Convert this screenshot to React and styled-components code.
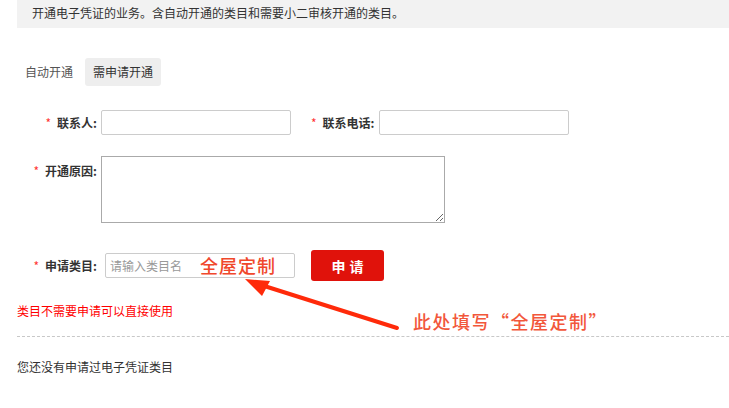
import React from 'react';
import styled, { createGlobalStyle } from 'styled-components';

const Global = createGlobalStyle`
  body {
    margin: 0;
    background: #fff;
    font-family: "Noto Sans CJK SC", "Liberation Sans", sans-serif;
    font-size: 12px;
    color: #333;
  }
`;

const Page = styled.div`
  position: relative;
  width: 729px;
  height: 408px;
  padding-left: 17px;
  box-sizing: border-box;
  overflow: hidden;
`;

const Banner = styled.div`
  height: 28px;
  line-height: 26px;
  background: #f2f2f2;
  padding-left: 15px;
  color: #333;
`;

const Tabs = styled.div`
  display: flex;
  gap: 4px;
  margin-top: 30px;
`;

const Tab = styled.div`
  height: 28px;
  line-height: 28px;
  padding: 0 8px;
  border-radius: 3px;
  color: ${p => (p.active ? '#333' : '#555')};
  background: ${p => (p.active ? '#eeeeee' : 'transparent')};
`;

const Row = styled.div`
  display: flex;
  align-items: ${p => (p.top ? 'flex-start' : 'center')};
  margin-top: ${p => p.mt}px;
`;

const Label = styled.label`
  width: ${p => (p.auto ? 'auto' : '80px')};
  margin-left: ${p => (p.auto ? '20px' : '0')};
  margin-right: ${p => p.gap || 4}px;
  padding-top: ${p => (p.top ? '6px' : '0')};
  text-align: right;
  font-weight: bold;
  color: #333;
  white-space: nowrap;
`;

const Star = styled.span`
  color: #f33;
  font-weight: normal;
  margin-right: 6px;
`;

const Input = styled.input`
  width: ${p => p.w}px;
  height: 25px;
  box-sizing: border-box;
  border: 1px solid #ccc;
  border-radius: 2px;
  padding: 0 4px;
  font: inherit;
  font-size: 12px;
  outline: none;
  &::placeholder {
    color: #999;
  }
`;

const TextArea = styled.textarea`
  width: 344px;
  height: 67px;
  box-sizing: border-box;
  border: 1px solid #aaa;
  border-radius: 0;
  font: inherit;
  margin: 0;
`;

const Submit = styled.button`
  margin-left: 16px;
  width: 73px;
  height: 31px;
  border: none;
  border-radius: 3px;
  background: #e0120b;
  color: #fff;
  font-family: inherit;
  font-size: 14px;
  font-weight: bold;
  letter-spacing: 4px;
  text-indent: 4px;
`;

const Hint = styled.p`
  margin: 21px 0 0;
  line-height: 18px;
  color: #f00;
`;

const Divider = styled.hr`
  margin: 16px 0 0;
  border: none;
  border-top: 1px dashed #c8c8c8;
`;

const Empty = styled.p`
  margin: 21px 0 0;
  line-height: 18px;
  color: #333;
`;

const Note = styled.span`
  position: absolute;
  left: ${p => p.x}px;
  top: ${p => p.y}px;
  font-size: 18px;
  font-weight: 500;
  letter-spacing: ${p => p.spacing}px;
  color: ${p => p.color};
  line-height: 20px;
  white-space: nowrap;
`;

const Arrow = styled.svg`
  position: absolute;
  left: 0;
  top: 0;
  pointer-events: none;
`;

export default function App() {
  return (
    <>
      <Global />
      <Page>
        <Banner>开通电子凭证的业务。含自动开通的类目和需要小二审核开通的类目。</Banner>
        <Tabs>
          <Tab>自动开通</Tab>
          <Tab active>需申请开通</Tab>
        </Tabs>

        <Row mt={24}>
          <Label><Star>*</Star>联系人:</Label>
          <Input w={190} />
          <Label auto><Star>*</Star>联系电话:</Label>
          <Input w={190} />
        </Row>

        <Row mt={21} top>
          <Label top><Star>*</Star>开通原因:</Label>
          <TextArea />
        </Row>

        <Row mt={27}>
          <Label gap={8}><Star>*</Star>申请类目:</Label>
          <Input w={190} placeholder="请输入类目名" />
          <Submit>申请</Submit>
        </Row>

        <Hint>类目不需要申请可以直接使用</Hint>
        <Divider />
        <Empty>您还没有申请过电子凭证类目</Empty>

        <Note x={200} y={255} spacing={1} color="#f0482c">全屋定制</Note>
        <Note x={413} y={311} spacing={1.5} color="#f2573b">此处填写“全屋定制”</Note>
        <Arrow width="729" height="408">
          <line x1="397" y1="328" x2="258" y2="284" stroke="#ff2a0a" strokeWidth="4" strokeLinecap="round" />
          <polygon points="245,279 270,281 262,296" fill="#ff2a0a" />
        </Arrow>
      </Page>
    </>
  );
}
